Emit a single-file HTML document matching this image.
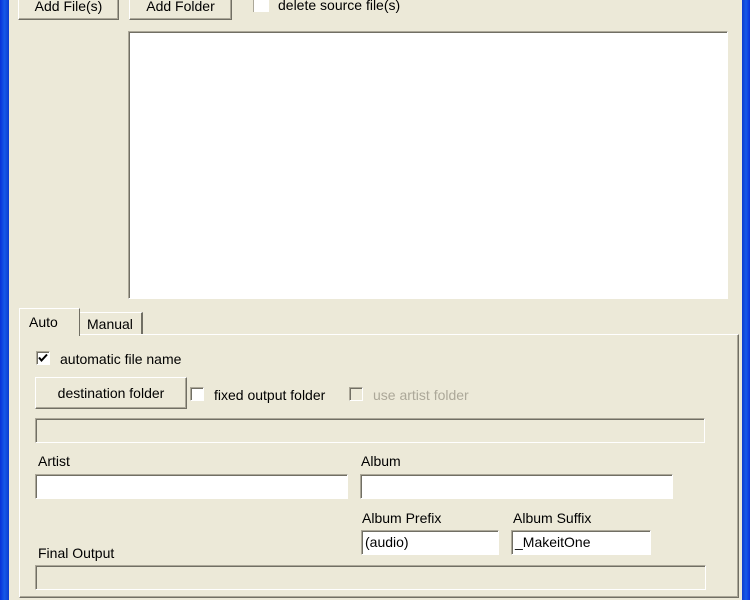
<html><head><style>
body{margin:0;width:750px;height:600px;background:#ECE9D8;position:relative;overflow:hidden;font-family:"Liberation Sans",sans-serif;font-size:14px;color:#000}
div,span,svg{position:absolute;box-sizing:border-box}
.btn{background:#ECE9D8;border:1px solid;border-color:#fff #716F64 #716F64 #fff;box-shadow:inset -1px -1px 0 #ACA899;text-align:center}
.sunk{border:1px solid;border-color:#ACA899 #fff #fff #ACA899;box-shadow:inset 1px 1px 0 #716F64}
.edit{background:#fff;border:1px solid;border-color:#ACA899 #fff #fff #ACA899;box-shadow:inset 1px 1px 0 #716F64;padding:5px 3px;font-size:14px}
.cb{width:14px;height:14px;background:#fff;border:1px solid;border-color:#ACA899 #fff #fff #ACA899;box-shadow:inset 1px 1px 0 #716F64}
</style></head><body>
<div style="left:0;top:0;width:9px;height:600px;background:linear-gradient(90deg,#0831D9,#1659E8,#0C3CCF)"></div>
<div style="left:742px;top:0;width:8px;height:600px;background:linear-gradient(90deg,#0C3CCF,#1659E8,#0831D9)"></div>
<div class="btn" style="left:18px;top:-6px;width:101px;height:26px;line-height:22px">Add File(s)</div>
<div class="btn" style="left:129px;top:-6px;width:103px;height:26px;line-height:22px">Add Folder</div>
<div style="left:253px;top:-3px;width:16px;height:15px;background:#fff;border-left:1px solid #ACA899"></div>
<span style="left:278px;top:-3px">delete source file(s)</span>
<div class="sunk" style="left:128px;top:31px;width:600px;height:268px;background:#fff"></div>
<div style="left:19px;top:334px;width:720px;height:264px;border:1px solid;border-color:#fff #716F64 #716F64 #fff;box-shadow:inset -1px -1px 0 #ACA899"></div>
<div style="left:19px;top:308px;width:61px;height:28px;background:#ECE9D8;border:1px solid #fff;border-bottom:none;border-right:1px solid #716F64"></div>
<span style="left:29px;top:314px">Auto</span>
<div style="left:80px;top:312px;width:63px;height:22px;border-top:1px solid #fff;border-right:2px solid #716F64"></div>
<span style="left:87px;top:316px">Manual</span>
<div class="cb" style="left:36px;top:351px"></div>
<svg style="left:36px;top:351px" width="14" height="14"><path d="M3 6.5 L5.5 9.5 L11 3.5" stroke="#000" stroke-width="2" fill="none"/></svg>
<span style="left:60px;top:351px">automatic file name</span>
<div class="btn" style="left:35px;top:377px;width:152px;height:32px;line-height:30px">destination folder</div>
<div class="cb" style="left:190px;top:387px"></div>
<span style="left:214px;top:387px">fixed output folder</span>
<div class="cb" style="left:349px;top:387px;background:#ECE9D8"></div>
<span style="left:373px;top:387px;color:#ACA899">use artist folder</span>
<div class="sunk" style="left:35px;top:418px;width:670px;height:25px"></div>
<span style="left:38px;top:453px">Artist</span>
<div class="edit" style="left:35px;top:474px;width:313px;height:25px"></div>
<span style="left:361px;top:453px">Album</span>
<div class="edit" style="left:360px;top:474px;width:313px;height:25px"></div>
<span style="left:362px;top:510px">Album Prefix</span>
<div class="edit" style="left:361px;top:530px;width:138px;height:25px;line-height:13px">(audio)</div>
<span style="left:513px;top:510px">Album Suffix</span>
<div class="edit" style="left:511px;top:530px;width:140px;height:25px;line-height:13px">_MakeitOne</div>
<span style="left:38px;top:545px">Final Output</span>
<div class="sunk" style="left:35px;top:565px;width:671px;height:25px"></div>
</body></html>
